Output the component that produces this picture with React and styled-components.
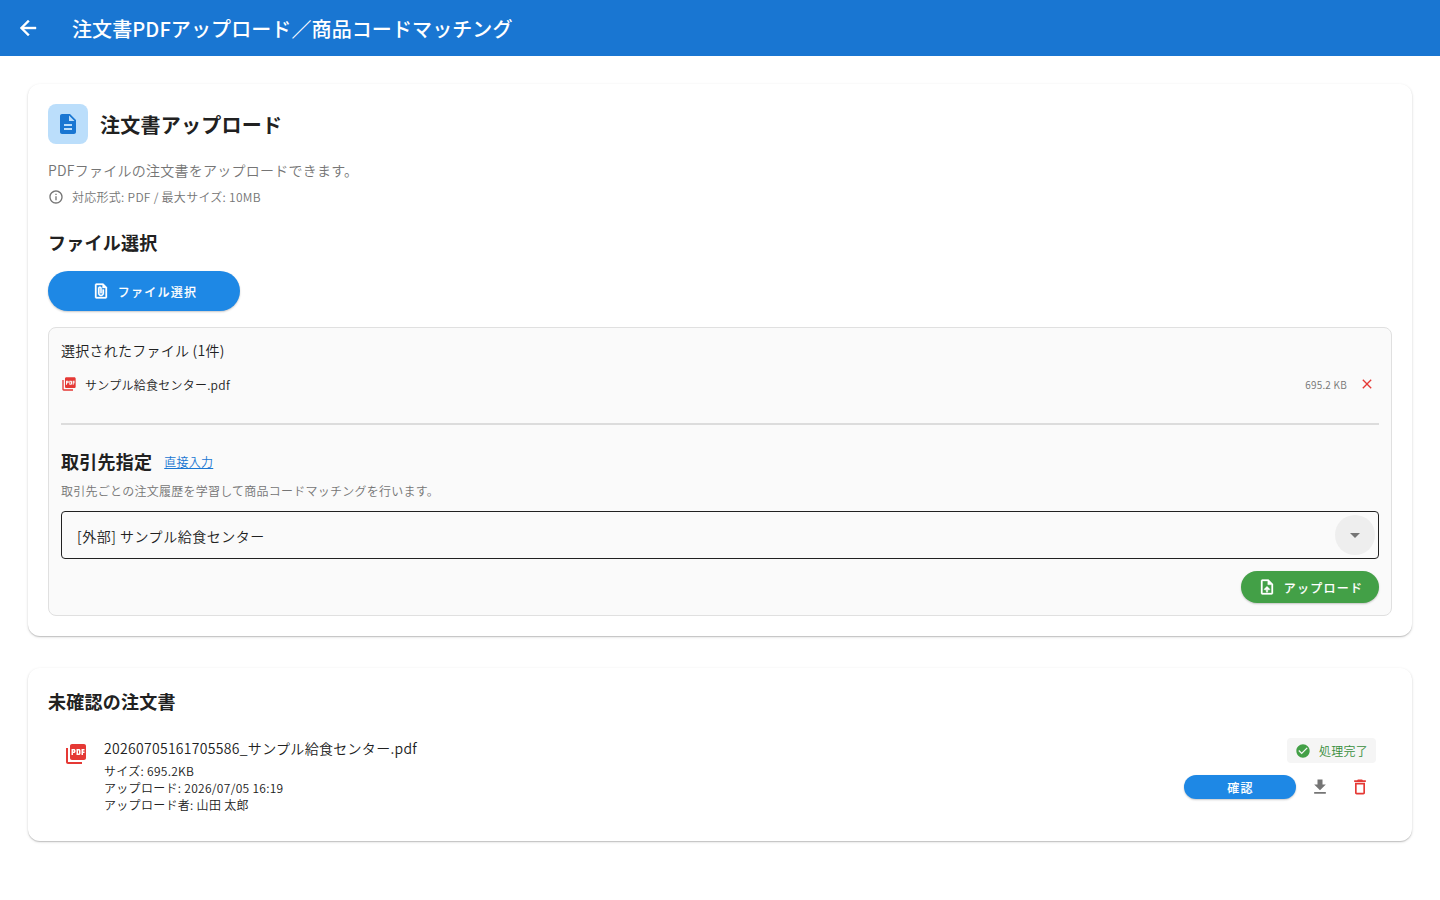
import React from 'react';
import styled, { createGlobalStyle } from 'styled-components';
import {
  MdArrowBack,
  MdArrowDropDown,
  MdCheckCircle,
  MdClose,
  MdDeleteOutline,
  MdDescription,
  MdDownload,
  MdInfoOutline,
  MdOutlineUploadFile,
  MdPictureAsPdf,
} from 'react-icons/md';

const GlobalStyle = createGlobalStyle`
  * {
    box-sizing: border-box;
  }

  body {
    margin: 0;
    background: #fff;
    color: #212121;
    font-family: 'Noto Sans CJK JP', sans-serif;
    font-size: 14px;
    font-weight: 350;
    letter-spacing: 0.25px;
  }

  svg {
    display: block;
    flex-shrink: 0;
  }

  button {
    border: none;
    padding: 0;
    background: none;
    font-family: inherit;
    cursor: pointer;
  }
`;

const AppBar = styled.header`
  display: flex;
  align-items: center;
  height: 56px;
  padding-left: 16px;
  background: #1976d2;
  color: #fff;

  path:not([fill='none']) {
    stroke: currentColor;
    stroke-width: 0.4px;
  }
`;

const AppTitle = styled.h1`
  margin: 0 0 0 32px;
  padding-top: 2px;
  font-size: 20px;
  font-weight: 500;
  line-height: 28px;
  letter-spacing: 0.1px;
`;

const IconButton = styled.button`
  display: flex;
  align-items: center;
  justify-content: center;
  width: ${(props) => props.$size}px;
  height: ${(props) => props.$size}px;
  color: ${(props) => props.$color};
`;

const Main = styled.main`
  display: flex;
  flex-direction: column;
  gap: 32px;
  padding: 28px;
`;

const Card = styled.section`
  height: ${(props) => props.$height}px;
  padding: 20px;
  background: #fff;
  border-radius: 12px;
  box-shadow: 0 1px 1px rgba(0, 0, 0, 0.16), 0 1px 3px rgba(0, 0, 0, 0.14);
`;

const CardHeader = styled.div`
  display: flex;
  align-items: center;
  gap: 12px;
`;

const HeaderIcon = styled.div`
  display: flex;
  align-items: center;
  justify-content: center;
  width: 40px;
  height: 40px;
  border-radius: 8px;
  background: #bbdefb;
  color: #1976d2;
`;

const CardTitle = styled.h2`
  margin: 0;
  padding-top: 2px;
  font-size: 20px;
  font-weight: 600;
  line-height: 30px;
`;

const Lead = styled.p`
  margin: 16px 0 0;
  color: #757575;
  line-height: 20px;
`;

const InfoRow = styled.div`
  display: flex;
  align-items: center;
  gap: 8px;
  margin-top: 8px;
  height: 17px;
  color: #757575;
  font-size: 12px;
  line-height: 17px;
  letter-spacing: 0.28px;
`;

const SectionTitle = styled.h3`
  margin: 0;
  font-size: 18px;
  font-weight: 600;
  line-height: 26px;
`;

const SelectSection = styled.div`
  margin-top: 24px;
`;

const PillButton = styled.button`
  display: flex;
  align-items: center;
  justify-content: center;
  gap: 8px;
  width: ${(props) => props.$width}px;
  height: ${(props) => props.$height}px;
  padding-left: 1px;
  border-radius: 20px;
  background: ${(props) => props.$bg};
  color: #fff;
  font-size: 12px;
  font-weight: 500;
  letter-spacing: 1.25px;
  -webkit-text-stroke: 0.1px currentColor;
  box-shadow: 0 1px 2px rgba(0, 0, 0, 0.22);

  path:not([fill='none']) {
    stroke: currentColor;
    stroke-width: 0.4px;
  }

  span {
    line-height: 17px;
  }
`;

const SelectButton = styled(PillButton)`
  margin-top: 16px;
`;

const FilePanel = styled.div`
  height: 289px;
  margin-top: 16px;
  padding: 12px;
  border: 1px solid #e0e0e0;
  border-radius: 8px;
  background: #fafafa;
`;

const PanelLabel = styled.div`
  line-height: 20px;
`;

const FileRow = styled.div`
  display: flex;
  align-items: center;
  height: 24px;
  margin-top: 12px;
  color: #e53935;
`;

const FileName = styled.span`
  flex: 1;
  margin-left: 8px;
  color: #212121;
  font-size: 12px;
  line-height: 17px;
`;

const FileSize = styled.span`
  margin-right: 8px;
  padding-top: 2px;
  color: #757575;
  font-size: 10px;
  line-height: 14px;
`;

const Divider = styled.hr`
  height: 2px;
  margin: 27px 0 0;
  border: none;
  background: #dcdcdc;
`;

const PartnerHeader = styled.div`
  display: flex;
  align-items: center;
  gap: 12px;
  margin-top: 23px;
`;

const DirectInput = styled.a`
  color: #1976d2;
  font-size: 12px;
  line-height: 17px;
  text-decoration: underline;
`;

const PartnerNote = styled.p`
  margin: 8px 0 0;
  color: #757575;
  font-size: 12px;
  line-height: 17px;
`;

const Select = styled.div`
  display: flex;
  align-items: center;
  justify-content: space-between;
  height: 48px;
  margin-top: 12px;
  padding: 0 3px 0 15px;
  border: 1px solid #212121;
  border-radius: 4px;
`;

const SelectValue = styled.span`
  padding-top: 1px;
  line-height: 20px;
  letter-spacing: 0.52px;
`;

const SelectArrow = styled.div`
  display: flex;
  align-items: center;
  justify-content: center;
  width: 40px;
  height: 40px;
  border-radius: 50%;
  background: #eee;
  color: #757575;
`;

const UploadRow = styled.div`
  display: flex;
  justify-content: flex-end;
  margin-top: 12px;
`;

const OrderItem = styled.div`
  display: flex;
  margin-top: 24px;
  padding: 0 16px;
`;

const OrderIcon = styled.div`
  padding-top: 4px;
  color: #e53935;
`;

const OrderInfo = styled.div`
  flex: 1;
  margin-left: 16px;
  letter-spacing: 0.3px;
`;

const OrderName = styled.div`
  line-height: 20px;
`;

const OrderMeta = styled.div`
  margin-top: 4px;
  font-size: 12px;
  line-height: 17px;
`;

const OrderSide = styled.div`
  display: flex;
  flex-direction: column;
  align-items: flex-end;
  gap: 8px;
`;

const StatusChip = styled.div`
  display: flex;
  align-items: center;
  gap: 8px;
  height: 25px;
  padding: 0 8px;
  border-radius: 4px;
  background: #f5f5f5;
  color: #43a047;
  font-size: 12px;

  span {
    color: #388e3c;
    line-height: 17px;
  }
`;

const OrderActions = styled.div`
  display: flex;
  align-items: center;
  gap: 8px;
  height: 32px;
`;

// Document outline with a paper clip inside
const FileClipIcon = () => (
  <svg width="18" height="18" viewBox="0 0 24 24" fill="currentColor">
    <path d="M15 2H6c-1.1 0-2 .9-2 2v16c0 1.1.9 2 2 2h12c1.1 0 2-.9 2-2V7l-5-5zM6 20V4h8v4h4v12H6z" />
    <path d="M16 10v5c0 2.21-1.79 4-4 4s-4-1.79-4-4V8.5C8 7.03 9.26 5.86 10.76 6.01 12.06 6.14 13 7.28 13 8.58V15h-2V8.5c0-.28-.22-.5-.5-.5s-.5.22-.5.5V15c0 1.1.9 2 2 2s2-.9 2-2v-5h2z" />
  </svg>
);

const App = () => {
  const file = { name: 'サンプル給食センター.pdf', size: '695.2 KB' };

  const order = {
    name: '20260705161705586_サンプル給食センター.pdf',
    meta: ['サイズ: 695.2KB', 'アップロード: 2026/07/05 16:19', 'アップロード者: 山田 太郎'],
    status: '処理完了',
  };

  return (
    <>
      <GlobalStyle />
      <AppBar>
        <IconButton $size={24} $color="#fff">
          <MdArrowBack size={24} />
        </IconButton>
        <AppTitle>注文書PDFアップロード／商品コードマッチング</AppTitle>
      </AppBar>
      <Main>
        <Card $height={552}>
          <CardHeader>
            <HeaderIcon>
              <MdDescription size={24} />
            </HeaderIcon>
            <CardTitle>注文書アップロード</CardTitle>
          </CardHeader>
          <Lead>PDFファイルの注文書をアップロードできます。</Lead>
          <InfoRow>
            <MdInfoOutline size={16} />
            <span>対応形式: PDF / 最大サイズ: 10MB</span>
          </InfoRow>

          <SelectSection>
            <SectionTitle>ファイル選択</SectionTitle>
            <SelectButton $width={192} $height={40} $bg="#1e88e5">
              <FileClipIcon />
              <span>ファイル選択</span>
            </SelectButton>
          </SelectSection>

          <FilePanel>
            <PanelLabel>選択されたファイル (1件)</PanelLabel>
            <FileRow>
              <MdPictureAsPdf size={16} />
              <FileName>{file.name}</FileName>
              <FileSize>{file.size}</FileSize>
              <IconButton $size={24} $color="#e53935">
                <MdClose size={16} />
              </IconButton>
            </FileRow>
            <Divider />
            <PartnerHeader>
              <SectionTitle>取引先指定</SectionTitle>
              <DirectInput>直接入力</DirectInput>
            </PartnerHeader>
            <PartnerNote>
              取引先ごとの注文履歴を学習して商品コードマッチングを行います。
            </PartnerNote>
            <Select>
              <SelectValue>[外部] サンプル給食センター</SelectValue>
              <SelectArrow>
                <MdArrowDropDown size={24} />
              </SelectArrow>
            </Select>
            <UploadRow>
              <PillButton $width={138} $height={32} $bg="#43a047">
                <MdOutlineUploadFile size={18} />
                <span>アップロード</span>
              </PillButton>
            </UploadRow>
          </FilePanel>
        </Card>

        <Card $height={173}>
          <SectionTitle>未確認の注文書</SectionTitle>
          <OrderItem>
            <OrderIcon>
              <MdPictureAsPdf size={24} />
            </OrderIcon>
            <OrderInfo>
              <OrderName>{order.name}</OrderName>
              <OrderMeta>
                {order.meta.map((line) => (
                  <div key={line}>{line}</div>
                ))}
              </OrderMeta>
            </OrderInfo>
            <OrderSide>
              <StatusChip>
                <MdCheckCircle size={16} />
                <span>{order.status}</span>
              </StatusChip>
              <OrderActions>
                <PillButton $width={112} $height={24} $bg="#1e88e5">
                  <span>確認</span>
                </PillButton>
                <IconButton $size={32} $color="#757575">
                  <MdDownload size={20} />
                </IconButton>
                <IconButton $size={32} $color="#e53935">
                  <MdDeleteOutline size={20} />
                </IconButton>
              </OrderActions>
            </OrderSide>
          </OrderItem>
        </Card>
      </Main>
    </>
  );
};

export default App;
